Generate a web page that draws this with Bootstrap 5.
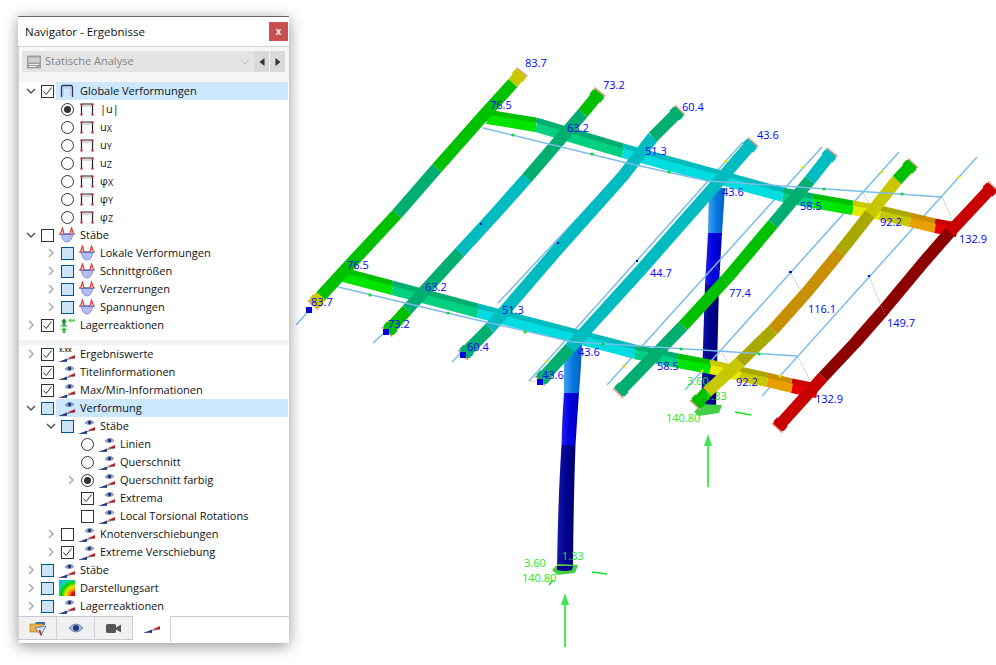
<!DOCTYPE html>
<html lang="de">
<head>
<meta charset="UTF-8">
<title>Navigator - Ergebnisse</title>
<link href="https://cdn.jsdelivr.net/npm/bootstrap@5.3.2/dist/css/bootstrap.min.css" rel="stylesheet">
<style>
html, body { background: #fff; overflow: hidden; }
.page-wrap { width: 996px; height: 665px; }
.nav-panel { width: 271px; height: 627px; margin: 16px 0 0 18px; background: #fff; border-top: 1px solid #666; box-shadow: 0 3px 14px rgba(0,0,0,.42); position: relative; z-index: 2; font-family: "Open Sans", "Noto Sans", sans-serif; font-size: 11px; color: #111; flex: none; }
.panel-title { height: 30px; padding: 0 1px 0 7px; font-size: 11.5px; border-bottom: 1px solid #d2d2da; }
.close-x { width: 19px; height: 19px; padding: 0; border: 0; border-radius: 0; background: #c75050; color: #fff; font: bold 10px/19px "Liberation Sans", sans-serif; }
.close-x:hover { background: #c75050; color: #fff; }
.combo-zone { height: 35px; padding: 4px 3px 0 3px; background: #f6f6f6; border-left: 1px solid #d2d2da; }
.combo-box { height: 21px; width: 232px; background: #e4e4e4; color: #858585; padding: 0 4px 0 5px; }
.combo-arrow { width: 15px; height: 21px; padding: 0; border: 0; border-radius: 0; background: #d9d9d9; }
.combo-arrow + .combo-arrow { margin-left: 1px; }
.combo-arrow:hover { background: #d9d9d9; }
.tree-body { height: 534px; border-left: 1px solid #d2d2da; padding-left: 2px; padding-right: 1px; }
.tree-part { list-style: none; margin: 0; padding: 0; }
.tree-gap { height: 11px; margin-left: -2px; margin-right: -1px; border-bottom: 5px solid #f2f2f2; }
.tree-row { height: 18px; white-space: nowrap; }
.lv1 { padding-left: 20px; }
.lv2 { padding-left: 40px; }
.chev-slot { width: 20px; height: 18px; flex: none; display: flex; align-items: center; justify-content: center; }
.row-label { margin-left: 2px; padding-left: 3px; height: 18px; flex: 1; display: flex; align-items: center; gap: 5px; }
.row-sel { background: #cce8ff; }
.row-label svg { flex: none; }
.form-check-input.tree-box { width: 13px; height: 13px; margin: 0; flex: none; border: 1px solid #333; border-radius: 0; background-color: #fff; box-shadow: none; }
.form-check-input.tree-box[type=radio] { border-radius: 50%; }
.form-check-input.tree-box:checked[type=checkbox] { background-color: #fff; border-color: #333; background-size: 11px; background-image: url("data:image/svg+xml,%3csvg xmlns='http://www.w3.org/2000/svg' viewBox='0 0 11 11'%3e%3cpath fill='none' stroke='%23333' stroke-width='1' d='M1.5 5.5l2.7 3 5.3-7'/%3e%3c/svg%3e"); }
.form-check-input.tree-box:checked[type=radio] { background-color: #fff; border-color: #333; background-size: 11px; background-image: url("data:image/svg+xml,%3csvg xmlns='http://www.w3.org/2000/svg' viewBox='0 0 11 11'%3e%3ccircle cx='5.5' cy='5.5' r='3.5' fill='%23333'/%3e%3c/svg%3e"); }
.form-check-input.tree-box.box-mixed { background-color: #cce4f7; border-color: #005499; }
.axis-sub { font-size: 9px; color: #223; position: relative; top: 1px; }
.tab-strip { height: 26px; border-top: 1px solid #c8c8d4; border-left: 1px solid #d2d2da; }
.tab-item { width: 38px; height: 23px; background: #f0f0f0; border-right: 1px solid #d2d2da; border-bottom: 1px solid #c8c8d4; }
.tab-on { height: 26px; background: #fff; margin-top: -1px; border-right: 1px solid #d2d2da; border-bottom: 0; }
.scene { flex: none; display: block; }
.scene text { font-family: "Open Sans", "Noto Sans", sans-serif; font-size: 11px; }
.val-blue { fill: #0000ff; }
.val-green { fill: #22e622; }
</style>
</head>
<body>

<svg width="0" height="0" class="position-absolute">
  <defs>
    <radialGradient id="rainbow" cx="1" cy="1" r="1.35">
      <stop offset=".16" stop-color="#e80000"/><stop offset=".3" stop-color="#f0a000"/><stop offset=".45" stop-color="#e8e800"/><stop offset=".62" stop-color="#00d000"/><stop offset=".8" stop-color="#00dcc0"/><stop offset="1" stop-color="#20a0f0"/>
    </radialGradient>
    <linearGradient id="tubeA" x1="0" x2="1" y1="0" y2="0"><stop offset="0" stop-color="#40a0f0"/><stop offset=".5" stop-color="#0878e0"/><stop offset="1" stop-color="#0060c0"/></linearGradient>
    <linearGradient id="tubeB" x1="0" x2="1" y1="0" y2="0"><stop offset="0" stop-color="#2020f0"/><stop offset=".5" stop-color="#0000e0"/><stop offset="1" stop-color="#0000b8"/></linearGradient>
    <linearGradient id="tubeC" x1="0" x2="1" y1="0" y2="0"><stop offset="0" stop-color="#1818b0"/><stop offset=".5" stop-color="#000090"/><stop offset="1" stop-color="#00006c"/></linearGradient>
  </defs>
  <symbol id="i-portal" viewBox="0 0 16 16"><path d="M2.500 14V4.500Q2.500 2.500 4.500 2.500H11.500Q13.500 2.500 13.500 4.500V14" fill="none" stroke="#2a3560" stroke-width="1.300"/><path d="M4.500 13V5H11.500V13" fill="none" stroke="#c4c8d8"/></symbol>
  <symbol id="i-portal-r" viewBox="0 0 16 16"><path d="M2.500 13V4Q2.500 3 3.500 3H12.500Q13.500 3 13.500 4V13" fill="none" stroke="#222" stroke-width="1.200"/><path d="M4 5H12" stroke="#b0b0b8"/><g fill="#c0323c"><circle cx="2.500" cy="3.500" r="1.200"/><circle cx="13.500" cy="3.500" r="1.200"/><circle cx="2.500" cy="13.500" r="1.200"/><circle cx="13.500" cy="13.500" r="1.200"/></g></symbol>
  <symbol id="i-member" viewBox="0 0 16 16"><path d="M2 7H14Q12.500 15 8 15T2 7Z" fill="#b4bcf0" stroke="#6a78d8" stroke-width=".7"/><path d="M0 7H16" stroke="#3a4a90"/><path d="M1.500 7L3.500 .5 5 7M11 7L12.500 .5 14.500 7" fill="#f8b8b8" stroke="#e02020"/></symbol>
  <symbol id="i-support" viewBox="0 0 16 16"><path d="M5 1.500L8 4.500H6.500V7.500H3.500V4.500H2Z" fill="#1d8f2c"/><path d="M1 9.500L5 7 9 9.500Z" fill="#2aa83c"/><path d="M5 10L8 13H6.500V16H3.500V13H2Z" fill="#46c04a"/><path d="M9 3.500L12 1V2.500H16V4.500H12V6Z" fill="#66cc66"/></symbol>
  <symbol id="i-wedge" viewBox="0 0 16 8"><path d="M0 8L8 4.500V7.200Z" fill="#1f3f9c"/><path d="M0 8H8V7Z" fill="#1f3f9c"/><path d="M8 4.500L16 1V4.500Z" fill="#c8242c"/><path d="M0 7.800L16 3.500" stroke="#223" stroke-width=".5"/></symbol>
  <symbol id="i-view" viewBox="0 0 16 16"><use href="#i-wedge" y="8" width="16" height="8"/><path d="M6 5Q10.500 0 15 4.500Q10.500 8.500 6 5Z" fill="#a4b2d4" stroke="#5a6a90" stroke-width=".6"/><circle cx="10.500" cy="4.500" r="1.800" fill="#24367a"/></symbol>
  <symbol id="chev-d" viewBox="0 0 10 10"><path d="M1 3L5 7 9 3" fill="none" stroke="#555" stroke-width="1.500"/></symbol>
  <symbol id="chev-r" viewBox="0 0 10 10"><path d="M3 1L7 5 3 9" fill="none" stroke="#aaa" stroke-width="1.500"/></symbol>
</svg>

<div class="page-wrap d-flex align-items-start">

  <div class="nav-panel d-flex flex-column">
    <div class="panel-title d-flex align-items-center justify-content-between">
      <span>Navigator - Ergebnisse</span>
      <button type="button" class="btn close-x">x</button>
    </div>
    <div class="combo-zone d-flex align-items-start">
      <div class="combo-box d-flex align-items-center">
        <svg width="14" height="14" viewBox="0 0 14 14" class="me-1 flex-none"><rect y=".5" width="14" height="13" fill="#a0a0a0"/><rect x="1.500" y="2.500" width="11" height="5" fill="#cfcfcf"/><path d="M2 9.500H12M2 11.500H9" stroke="#e8e8e8"/></svg>
        <span class="flex-grow-1">Statische Analyse</span>
        <svg width="10" height="10" viewBox="0 0 10 10"><path d="M1 3L5 7 9 3" fill="none" stroke="#bbb"/></svg>
      </div>
      <button type="button" class="btn combo-arrow"><svg width="6" height="8" viewBox="0 0 6 8" class="d-block mx-auto"><path d="M5.500 0V8L.5 4Z" fill="#333"/></svg></button>
      <button type="button" class="btn combo-arrow"><svg width="6" height="8" viewBox="0 0 6 8" class="d-block mx-auto"><path d="M.5 0V8L5.500 4Z" fill="#333"/></svg></button>
    </div>

    <div class="tree-body">
      <ul class="tree-part">
        <li class="tree-row d-flex align-items-center"><span class="chev-slot"><svg width="10" height="10"><use href="#chev-d"/></svg></span><input class="form-check-input tree-box" type="checkbox" checked><div class="row-label row-sel"><svg width="16" height="16"><use href="#i-portal"/></svg><span>Globale Verformungen</span></div></li>
        <li class="tree-row d-flex align-items-center lv1"><span class="chev-slot"></span><input class="form-check-input tree-box" type="radio" name="comp" checked><div class="row-label"><svg width="16" height="16"><use href="#i-portal-r"/></svg><span>|u|</span></div></li>
        <li class="tree-row d-flex align-items-center lv1"><span class="chev-slot"></span><input class="form-check-input tree-box" type="radio" name="comp"><div class="row-label"><svg width="16" height="16"><use href="#i-portal-r"/></svg><span>u<span class="axis-sub">X</span></span></div></li>
        <li class="tree-row d-flex align-items-center lv1"><span class="chev-slot"></span><input class="form-check-input tree-box" type="radio" name="comp"><div class="row-label"><svg width="16" height="16"><use href="#i-portal-r"/></svg><span>u<span class="axis-sub">Y</span></span></div></li>
        <li class="tree-row d-flex align-items-center lv1"><span class="chev-slot"></span><input class="form-check-input tree-box" type="radio" name="comp"><div class="row-label"><svg width="16" height="16"><use href="#i-portal-r"/></svg><span>u<span class="axis-sub">Z</span></span></div></li>
        <li class="tree-row d-flex align-items-center lv1"><span class="chev-slot"></span><input class="form-check-input tree-box" type="radio" name="comp"><div class="row-label"><svg width="16" height="16"><use href="#i-portal-r"/></svg><span>φ<span class="axis-sub">X</span></span></div></li>
        <li class="tree-row d-flex align-items-center lv1"><span class="chev-slot"></span><input class="form-check-input tree-box" type="radio" name="comp"><div class="row-label"><svg width="16" height="16"><use href="#i-portal-r"/></svg><span>φ<span class="axis-sub">Y</span></span></div></li>
        <li class="tree-row d-flex align-items-center lv1"><span class="chev-slot"></span><input class="form-check-input tree-box" type="radio" name="comp"><div class="row-label"><svg width="16" height="16"><use href="#i-portal-r"/></svg><span>φ<span class="axis-sub">Z</span></span></div></li>
        <li class="tree-row d-flex align-items-center"><span class="chev-slot"><svg width="10" height="10"><use href="#chev-d"/></svg></span><input class="form-check-input tree-box" type="checkbox"><div class="row-label"><svg width="16" height="16"><use href="#i-member"/></svg><span>Stäbe</span></div></li>
        <li class="tree-row d-flex align-items-center lv1"><span class="chev-slot"><svg width="10" height="10"><use href="#chev-r"/></svg></span><input class="form-check-input tree-box box-mixed" type="checkbox"><div class="row-label"><svg width="16" height="16"><use href="#i-member"/></svg><span>Lokale Verformungen</span></div></li>
        <li class="tree-row d-flex align-items-center lv1"><span class="chev-slot"><svg width="10" height="10"><use href="#chev-r"/></svg></span><input class="form-check-input tree-box box-mixed" type="checkbox"><div class="row-label"><svg width="16" height="16"><use href="#i-member"/></svg><span>Schnittgrößen</span></div></li>
        <li class="tree-row d-flex align-items-center lv1"><span class="chev-slot"><svg width="10" height="10"><use href="#chev-r"/></svg></span><input class="form-check-input tree-box box-mixed" type="checkbox"><div class="row-label"><svg width="16" height="16"><use href="#i-member"/></svg><span>Verzerrungen</span></div></li>
        <li class="tree-row d-flex align-items-center lv1"><span class="chev-slot"><svg width="10" height="10"><use href="#chev-r"/></svg></span><input class="form-check-input tree-box box-mixed" type="checkbox"><div class="row-label"><svg width="16" height="16"><use href="#i-member"/></svg><span>Spannungen</span></div></li>
        <li class="tree-row d-flex align-items-center"><span class="chev-slot"><svg width="10" height="10"><use href="#chev-r"/></svg></span><input class="form-check-input tree-box" type="checkbox" checked><div class="row-label"><svg width="16" height="16"><use href="#i-support"/></svg><span>Lagerreaktionen</span></div></li>
      </ul>
      <div class="tree-gap"></div>
      <ul class="tree-part">
        <li class="tree-row d-flex align-items-center"><span class="chev-slot"><svg width="10" height="10"><use href="#chev-r"/></svg></span><input class="form-check-input tree-box" type="checkbox" checked><div class="row-label"><svg width="16" height="16" viewBox="0 0 16 16"><use href="#i-wedge" y="8" width="16" height="8"/><text x="0" y="6" font-family="Liberation Sans, sans-serif" font-size="6.500" font-weight="bold" fill="#333">x.xx</text></svg><span>Ergebniswerte</span></div></li>
        <li class="tree-row d-flex align-items-center"><span class="chev-slot"></span><input class="form-check-input tree-box" type="checkbox" checked><div class="row-label"><svg width="16" height="16"><use href="#i-view"/></svg><span>Titelinformationen</span></div></li>
        <li class="tree-row d-flex align-items-center"><span class="chev-slot"></span><input class="form-check-input tree-box" type="checkbox" checked><div class="row-label"><svg width="16" height="16"><use href="#i-view"/></svg><span>Max/Min-Informationen</span></div></li>
        <li class="tree-row d-flex align-items-center"><span class="chev-slot"><svg width="10" height="10"><use href="#chev-d"/></svg></span><input class="form-check-input tree-box box-mixed" type="checkbox"><div class="row-label row-sel"><svg width="16" height="16"><use href="#i-view"/></svg><span>Verformung</span></div></li>
        <li class="tree-row d-flex align-items-center lv1"><span class="chev-slot"><svg width="10" height="10"><use href="#chev-d"/></svg></span><input class="form-check-input tree-box box-mixed" type="checkbox"><div class="row-label"><svg width="16" height="16"><use href="#i-view"/></svg><span>Stäbe</span></div></li>
        <li class="tree-row d-flex align-items-center lv2"><span class="chev-slot"></span><input class="form-check-input tree-box" type="radio" name="mode"><div class="row-label"><svg width="16" height="16"><use href="#i-view"/></svg><span>Linien</span></div></li>
        <li class="tree-row d-flex align-items-center lv2"><span class="chev-slot"></span><input class="form-check-input tree-box" type="radio" name="mode"><div class="row-label"><svg width="16" height="16"><use href="#i-view"/></svg><span>Querschnitt</span></div></li>
        <li class="tree-row d-flex align-items-center lv2"><span class="chev-slot"><svg width="10" height="10"><use href="#chev-r"/></svg></span><input class="form-check-input tree-box" type="radio" name="mode" checked><div class="row-label"><svg width="16" height="16"><use href="#i-view"/></svg><span>Querschnitt farbig</span></div></li>
        <li class="tree-row d-flex align-items-center lv2"><span class="chev-slot"></span><input class="form-check-input tree-box" type="checkbox" checked><div class="row-label"><svg width="16" height="16"><use href="#i-view"/></svg><span>Extrema</span></div></li>
        <li class="tree-row d-flex align-items-center lv2"><span class="chev-slot"></span><input class="form-check-input tree-box" type="checkbox"><div class="row-label"><svg width="16" height="16"><use href="#i-view"/></svg><span>Local Torsional Rotations</span></div></li>
        <li class="tree-row d-flex align-items-center lv1"><span class="chev-slot"><svg width="10" height="10"><use href="#chev-r"/></svg></span><input class="form-check-input tree-box" type="checkbox"><div class="row-label"><svg width="16" height="16"><use href="#i-view"/></svg><span>Knotenverschiebungen</span></div></li>
        <li class="tree-row d-flex align-items-center lv1"><span class="chev-slot"><svg width="10" height="10"><use href="#chev-r"/></svg></span><input class="form-check-input tree-box" type="checkbox" checked><div class="row-label"><svg width="16" height="16"><use href="#i-view"/></svg><span>Extreme Verschiebung</span></div></li>
        <li class="tree-row d-flex align-items-center"><span class="chev-slot"><svg width="10" height="10"><use href="#chev-r"/></svg></span><input class="form-check-input tree-box box-mixed" type="checkbox"><div class="row-label"><svg width="16" height="16"><use href="#i-view"/></svg><span>Stäbe</span></div></li>
        <li class="tree-row d-flex align-items-center"><span class="chev-slot"><svg width="10" height="10"><use href="#chev-r"/></svg></span><input class="form-check-input tree-box box-mixed" type="checkbox"><div class="row-label"><svg width="16" height="16" viewBox="0 0 16 16"><rect width="16" height="16" fill="url(#rainbow)"/></svg><span>Darstellungsart</span></div></li>
        <li class="tree-row d-flex align-items-center"><span class="chev-slot"><svg width="10" height="10"><use href="#chev-r"/></svg></span><input class="form-check-input tree-box box-mixed" type="checkbox"><div class="row-label"><svg width="16" height="16"><use href="#i-view"/></svg><span>Lagerreaktionen</span></div></li>
      </ul>
    </div>

    <div class="tab-strip d-flex align-items-start">
      <div class="tab-item d-flex align-items-center justify-content-center"><svg width="18" height="16" viewBox="0 0 18 16"><path d="M1 4H6L7 2H16V5H1Z" fill="#3a6fb0"/><path d="M1 4H14V12H1Z" fill="#e8b44c" stroke="#a87820" stroke-width=".6"/><path d="M6 8L17 6 12 15Z" fill="#d8e4f4" stroke="#4a70a8" stroke-width=".8"/><path d="M10.500 10L12.500 15.500" stroke="#c02020" stroke-width="1.500"/></svg></div>
      <div class="tab-item d-flex align-items-center justify-content-center"><svg width="16" height="12" viewBox="0 0 16 12"><path d="M1 6Q8 -2 15 6Q8 14 1 6Z" fill="#a8b8d8" stroke="#5a6a90" stroke-width=".7"/><circle cx="8" cy="6" r="3" fill="#233a80"/></svg></div>
      <div class="tab-item d-flex align-items-center justify-content-center"><svg width="15" height="11" viewBox="0 0 15 11"><rect y="1" width="10" height="9" rx="1.500" fill="#555"/><path d="M10 4.500L15 1.500V9.500L10 6.500Z" fill="#555"/></svg></div>
      <div class="tab-item tab-on d-flex align-items-center justify-content-center"><svg width="16" height="8"><use href="#i-wedge"/></svg></div>
    </div>
  </div>

  <svg class="scene" width="707" height="665" viewBox="289 0 707 665">
    <!-- columns -->
    <g>
      <path d="M564 345H582Q581 370 579 393H564Q564 370 564 345Z" fill="url(#tubeA)"/>
      <path d="M564 393H579Q577 420 575.500 445H561.500Q562 420 564 393Z" fill="url(#tubeB)"/>
      <path d="M561.500 445H575.500Q573.500 500 573 568H557Q558 500 561.500 445Z" fill="url(#tubeC)"/>
      <path d="M709 188H725L722 233H708Z" fill="url(#tubeA)"/>
      <path d="M708 233H722L719 285H705Z" fill="url(#tubeB)"/>
      <path d="M705 285H719L716 410H701Z" fill="url(#tubeC)"/>
    </g>
    <!-- supports under the columns -->
    <path d="M552 570L558 564 578 565 575 573 557 575Z" fill="#44d044"/>
    <path d="M694 412L701 404 722 405 719 413 699 416Z" fill="#44d044"/>
    <path d="M557 566H573L572 570Q565 572 557 570Z" fill="#000090"/>
    <g id="rails-long" fill="none" stroke="#7cbcea" stroke-width="1.500">
      <path d="M296 325L307 313"/>
      <path d="M373 343L385 332M457 252L523 178"/>
      <path d="M452 362L462 352M498 303L627 165"/>
      <path d="M529 381L743 142"/>
      <path d="M607 385L822 147"/>
      <path d="M685 390L899 152"/>
      <path d="M762 396L977 157"/>
    </g>
    <g id="beams-cross"></g>
    <g id="beams-long"></g>
    <g id="rails-cross" fill="none" stroke="#7cbcea" stroke-width="1.500">
      <path d="M483 128L627 163 708 181 783 186 942 197"/>
      <path d="M338 287L477 320 573 342 640 346 797 356"/>
    </g>
    <g fill="none" stroke="#999" stroke-dasharray="1 1.500">
      <path d="M790 272L807 302M869 276L885 315M942 197L953 222M798 357L810 380M715 265L728 285M863 193L873 210M722 353L728 363M529 381L540 382"/>
    </g>
    <g fill="#00e020">
      <circle cx="513" cy="135" r="1.600"/><circle cx="592" cy="154" r="1.600"/><circle cx="370" cy="295" r="1.600"/><circle cx="448" cy="313" r="1.600"/><circle cx="525" cy="332" r="1.600"/><circle cx="603" cy="344" r="1.600"/><circle cx="669" cy="172" r="1.600"/><circle cx="824" cy="189" r="1.600"/><circle cx="902" cy="194" r="1.600"/><circle cx="681" cy="349" r="1.600"/><circle cx="759" cy="354" r="1.600"/>
    </g>
    <g fill="#e4e400">
      <circle cx="726" cy="161" r="1.600"/><circle cx="803" cy="167" r="1.600"/><circle cx="882" cy="172" r="1.600"/><circle cx="959" cy="177" r="1.600"/><circle cx="547" cy="361" r="1.600"/><circle cx="624" cy="366" r="1.600"/><circle cx="702" cy="371" r="1.600"/><circle cx="780" cy="376" r="1.600"/>
    </g>
    <g fill="#0000e0">
      <rect x="306" y="307" width="6" height="6"/><rect x="383" y="329" width="6" height="6"/><rect x="460" y="352" width="6" height="6"/><rect x="537" y="379" width="6" height="6"/>
      <rect x="480" y="223" width="2" height="2"/><rect x="557" y="242" width="2" height="2"/><rect x="636" y="260" width="2" height="2"/><rect x="789" y="271" width="3" height="2"/><rect x="868" y="275" width="2" height="2"/>
    </g>
    <!-- values -->
    <g class="val-blue">
      <text x="525" y="67">83.7</text><text x="603" y="89">73.2</text><text x="490" y="109">76.5</text><text x="567" y="132">63.2</text>
      <text x="347" y="269">76.5</text><text x="425" y="291">63.2</text><text x="311" y="306">83.7</text><text x="388" y="328">73.2</text>
      <text x="645" y="155">51.3</text><text x="682" y="111">60.4</text><text x="757" y="139">43.6</text><text x="722" y="196">43.6</text>
      <text x="800" y="210">58.5</text><text x="880" y="226">92.2</text><text x="959" y="243">132.9</text><text x="650" y="277">44.7</text>
      <text x="729" y="297">77.4</text><text x="808" y="313">116.1</text><text x="887" y="327">149.7</text><text x="657" y="370">58.5</text>
      <text x="736" y="386">92.2</text><text x="815" y="403">132.9</text><text x="502" y="314">51.3</text><text x="467" y="351">60.4</text>
      <text x="578" y="356">43.6</text><text x="542" y="379">43.6</text>
    </g>
    <g class="val-green">
      <text x="687" y="385">3.60</text><text x="705" y="400">1.33</text><text x="666" y="422">140.80</text>
      <text x="524" y="567">3.60</text><text x="562" y="560">1.33</text><text x="522" y="582">140.80</text>
    </g>
    <!-- reaction arrows -->
    <g stroke="#10e820" stroke-width="1.500" fill="none">
      <path d="M565 647V600M708 487V440"/>
      <path d="M592 572L607 574M735 412L751 415M549 585L553 580"/>
    </g>
    <path d="M565 593L569 605H561Z" fill="#40e850"/>
    <path d="M708 434L712 446H704Z" fill="#40e850"/>
  </svg>
</div>

<script src="https://cdn.jsdelivr.net/npm/bootstrap@5.3.2/dist/js/bootstrap.bundle.min.js"></script>
<script>
  // stress colours: [dark flange, bright web]
  const tone = {
    gr: ['#00c000', '#00e400'], tg: ['#00ae70', '#00d080'], cy: ['#00bcc0', '#00dce0'],
    ye: ['#c8c800', '#e8e800'], ol: ['#a8a800', '#c8c800'], or: ['#c89000', '#e8a000'],
    re: ['#c80000', '#e80000'], dr: ['#8c0000', '#8c0000']
  };
  const ns = 'http://www.w3.org/2000/svg';

  function addPath(parent, pts, color, width, dy) {
    const p = document.createElementNS(ns, 'polyline');
    p.setAttribute('points', pts.map(q => q[0] + ',' + (q[1] + dy)).join(' '));
    p.setAttribute('fill', 'none');
    p.setAttribute('stroke', color);
    p.setAttribute('stroke-width', width);
    p.setAttribute('stroke-linejoin', 'round');
    parent.appendChild(p);
  }

  // cross beams: every point carries the colour of the piece that starts there
  const crossBeams = [
    [[487,117,'gr'],[536,125,'tg'],[623,151,'cy'],[783,195,'tg'],[813,201,'gr'],[853,208,'ye'],[880,213,'ol'],[910,220,'or'],[935,226,'re'],[957,230]],
    [[343,275,'gr'],[392,288,'tg'],[478,311,'cy'],[635,352,'tg'],[678,361,'gr'],[710,367,'ye'],[740,374,'ol'],[767,380,'or'],[792,386,'re'],[817,391]]
  ];
  const crossGroup = document.getElementById('beams-cross');
  crossBeams.forEach(pts => {
    for (let i = 0; i < pts.length - 1; i++) {
      addPath(crossGroup, [pts[i], pts[i + 1]], tone[pts[i][2]][1], 10, 2);
      addPath(crossGroup, [pts[i], pts[i + 1]], tone[pts[i][2]][0], 5, -5);
    }
  });

  // long beams, bottom to top; runs of one colour are drawn as one polyline
  const longBeams = [
    [[313,305,'ye'],[321,296,'gr'],[343,272,'gr'],[397,214,'tg'],[437,168,'gr'],[483,116,'gr'],[513,83,'ye'],[522,72]],
    [[387,332,'gr'],[407,310,'tg'],[460,252,'cy'],[495,214,'cy'],[527,178,'tg'],[583,113,'gr'],[600,92]],
    [[463,355,'tg'],[490,328,'cy'],[557,250,'cy'],[623,176,'cy'],[653,137,'tg'],[680,110]],
    [[540,381,'tg'],[570,348,'cy'],[640,271,'cy'],[720,180,'cy'],[753,142]],
    [[618,393,'tg'],[683,326,'gr'],[730,275,'gr'],[773,224,'tg'],[810,180,'cy'],[832,152]],
    [[695,405,'gr'],[707,392,'ye'],[740,362,'ol'],[773,330,'or'],[807,292,'or'],[840,252,'ol'],[870,214,'ye'],[897,180,'gr'],[913,163]],
    [[777,428,'re'],[823,377,'dr'],[855,343,'dr'],[883,311,'dr'],[923,263,'dr'],[950,232,'re'],[993,186]]
  ];
  const longGroup = document.getElementById('beams-long');

  // stepped end of the I-profile, a little wider than the beam
  function endStep(end, next, color) {
    const dx = next[0] - end[0], dy = next[1] - end[1], len = Math.hypot(dx, dy);
    const ux = dx / len, uy = dy / len;
    addPath(longGroup, [[end[0] + ux * 2, end[1] + uy * 2], [end[0] + ux * 8, end[1] + uy * 8]], color, 14, 0);
    addPath(longGroup, [[end[0] - uy * 7, end[1] + ux * 7], [end[0] + uy * 7, end[1] - ux * 7]], '#e6a090', 1.5, 0);
  }

  longBeams.forEach(pts => {
    let run = [pts[0]];
    for (let i = 1; i < pts.length; i++) {
      run.push(pts[i]);
      if (pts[i][2] !== run[0][2]) {
        addPath(longGroup, run, tone[run[0][2]][0], 12, 0);
        run = [pts[i]];
      }
    }
    endStep(pts[0], pts[1], tone[pts[0][2]][0]);
    const n = pts.length - 1;
    endStep(pts[n], pts[n - 1], tone[pts[n - 1][2]][0]);
  });
</script>
</body>
</html>
